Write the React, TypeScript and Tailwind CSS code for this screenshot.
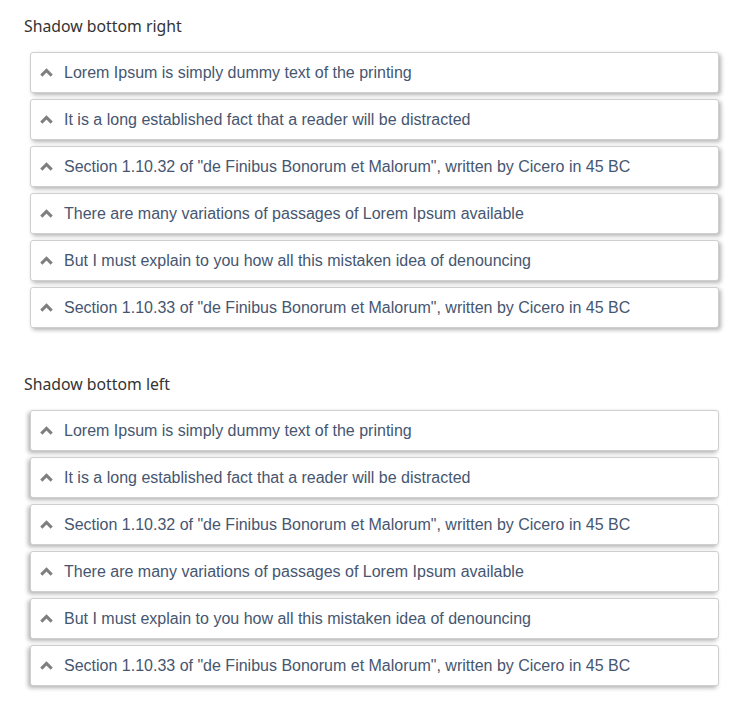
import React from 'react';

const items = [
  'Lorem Ipsum is simply dummy text of the printing',
  'It is a long established fact that a reader will be distracted',
  'Section 1.10.32 of "de Finibus Bonorum et Malorum", written by Cicero in 45 BC',
  'There are many variations of passages of Lorem Ipsum available',
  'But I must explain to you how all this mistaken idea of denouncing',
  'Section 1.10.33 of "de Finibus Bonorum et Malorum", written by Cicero in 45 BC',
];

const Chevron = () => (
  <svg width="13" height="9" viewBox="0 0 13 9" className="shrink-0">
    <path d="M1.3 7.6 L6.5 2.4 L11.7 7.6" fill="none" stroke="#7f7f7f" strokeWidth="3" />
  </svg>
);

type AccordionProps = {
  title: string;
  shadow: string;
};

const Accordion: React.FC<AccordionProps> = ({ title, shadow }) => (
  <div>
    <h2 className="pl-6 h-5 leading-5 text-[15.8px] text-[#333] font-['Noto_Sans',sans-serif] mb-4">
      {title}
    </h2>
    <div className="ml-[30px] w-[689px] flex flex-col gap-[6px]">
      {items.map((text, i) => (
        <div
          key={i}
          className={`h-[41px] flex items-center gap-[11px] pl-[9px] bg-white border border-[#cfcfcf] rounded-[3px] ${shadow}`}
        >
          <Chevron />
          <span className="text-[16px] text-[#465670] font-['Liberation_Sans',Arial,sans-serif]">{text}</span>
        </div>
      ))}
    </div>
  </div>
);

export default function App() {
  return (
    <div className="bg-white min-h-[707px] pt-4">
      <Accordion title="Shadow bottom right" shadow="shadow-[2px_2px_4px_rgba(0,0,0,0.3)]" />
      <div className="h-[46px]" />
      <Accordion title="Shadow bottom left" shadow="shadow-[-2px_2px_4px_rgba(0,0,0,0.3)]" />
    </div>
  );
}
